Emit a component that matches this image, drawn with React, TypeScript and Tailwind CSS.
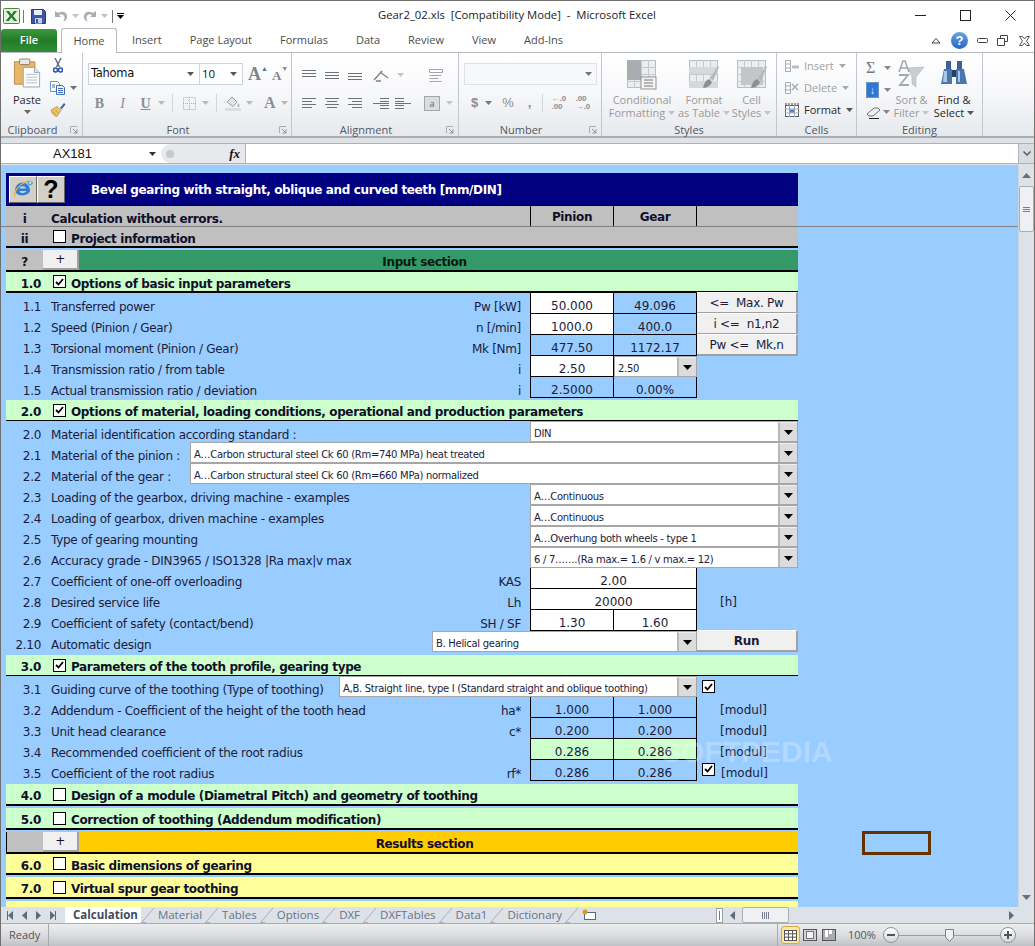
import type { ReactNode } from "react";

const BOLD = "font-bold text-[12px] tracking-[-0.37px]";

const Caret = ({ className = "ml-[3px]", color = "#6b6f75" }: { className?: string; color?: string }) => (
  <svg width="7" height="4" viewBox="0 0 7 4" className={`flex-none ${className}`}>
    <path d="M0 0h7L3.500 4z" fill={color} />
  </svg>
);

// ---- toolbar icons ----
const ExcelLogo = () => (
  <svg width="17" height="16" viewBox="0 0 17 16">
    <rect x="0.5" y="0.5" width="16" height="15" rx="1" fill="#e4f0dc" stroke="#4b8a3c" />
    <path d="M3 3h3l2.400 3.400L11 3h3l-4 5 4.200 5h-3.100L8.400 9.600 5.800 13H2.800l4-5z" fill="#1f7a2a" />
  </svg>
);
const SaveIcon = () => (
  <svg width="15" height="15" viewBox="0 0 15 15">
    <path d="M0.500 0.500h12l2 2v12h-14z" fill="#3f55a8" stroke="#2b3a80" />
    <rect x="3" y="1" width="8" height="5" fill="#e8edf7" />
    <rect x="4" y="9" width="7" height="5.500" fill="#c7cede" />
    <rect x="5" y="10" width="2" height="4" fill="#3f55a8" />
  </svg>
);
const UndoIcon = ({ flip = false }: { flip?: boolean }) => (
  <svg width="14" height="13" viewBox="0 0 14 13" className={flip ? "-scale-x-100" : ""}>
    <path d="M1 1v6h6L5 5c2-1.500 5-.5 5.500 2 .3 1.800-.5 3.500-1.500 4.500 3-.5 4.500-3 4-6C12.300 2 8 .5 4 3z" fill="#a9adb3" />
  </svg>
);
const PasteIcon = () => (
  <svg width="28" height="32" viewBox="0 0 30 33">
    <path d="M1.500 4.500h22v24h-22z" fill="#e8b666" stroke="#b98a45" />
    <rect x="7" y="1.500" width="11" height="6" rx="1" fill="#e6e8ec" stroke="#8f7a55" />
    <path d="M11 29.500V10.500h12l5.500 5.500v15.500H11z" fill="#fbfcfe" stroke="#9aa3af" />
    <path d="M23 10.500V16h5.500" fill="#dfe5ee" stroke="#9aa3af" />
    <path d="M14 18h12M14 21h12M14 24h12M14 27h12" stroke="#b4bcc8" />
  </svg>
);
const CutIcon = () => (
  <svg width="10" height="15" viewBox="0 0 10 15">
    <path d="M2 0l4.500 9M8 0L3.500 9" stroke="#5b6a82" strokeWidth="1.400" />
    <circle cx="2.500" cy="12" r="2" fill="none" stroke="#2b50b0" strokeWidth="1.500" />
    <circle cx="7.500" cy="12" r="2" fill="none" stroke="#2b50b0" strokeWidth="1.500" />
  </svg>
);
const CopyIcon = () => (
  <svg width="15" height="14" viewBox="0 0 15 14">
    <path d="M.5.500h7l2 2v8h-9z" fill="#fff" stroke="#6f93c9" />
    <path d="M6.500 4.500h6l2 2v7h-8z" fill="#e9f1fb" stroke="#3e6fb8" />
    <path d="M8 7.500h5M8 9.500h5M8 11.500h5M2 4h3M2 6h3" stroke="#3e6fb8" />
  </svg>
);
const PainterIcon = () => (
  <svg width="16" height="15" viewBox="0 0 16 15">
    <path d="M10 6l4-5 1.500 1.500-4 5z" fill="#4a5fb5" />
    <path d="M1 8l6-3.500 4 4L7 14.500C4 14 2 12 1 8z" fill="#e9c368" stroke="#a98a3f" strokeWidth=".7" />
    <path d="M3 9.500l2.500 3M5.500 8l2.500 3" stroke="#a98a3f" strokeWidth=".7" />
  </svg>
);
const Launcher = () => (
  <svg width="8" height="8" viewBox="0 0 8 8">
    <path d="M.5 7V.5H7" fill="none" stroke="#a9adb3" />
    <path d="M3 3l3.500 3.500M7 3.500V7H3.500" fill="none" stroke="#8a8f96" />
  </svg>
);

const Lines = ({ lines, w = 14, h = 10 }: { lines: number[][]; w?: number; h?: number }) => (
  <svg width={w} height={h} viewBox={`0 0 ${w} ${h}`} className="flex-none">
    {lines.map((l, i) => (
      <path key={i} d={`M${l[0]} ${l[2] + 0.5}H${l[1]}`} stroke="#6d7278" />
    ))}
  </svg>
);

const GrayGrid = ({ children }: { children?: ReactNode }) => (
  <svg width="30" height="30" viewBox="0 0 30 30">
    <rect x=".5" y=".5" width="28" height="27" fill="#ecedef" stroke="#b9bcc0" />
    <path d="M7.500 0v28M14.500 0v28M21.500 0v28M0 7.500h29M0 14.500h29M0 21.500h29" stroke="#c6c9cd" />
    {children}
  </svg>
);
const Brush = () => (
  <>
    <path d="M14 28c1-5 3-8 6-9l3 3c-1 3-5 6-9 6z" fill="#8c8f94" />
    <path d="M21 18L29 6l1 1-6 14z" fill="#b5b8bc" />
  </>
);

const RowIcon = ({ d }: { d: ReactNode }) => (
  <svg width="16" height="16" viewBox="0 0 16 16" className="flex-none">{d}</svg>
);

const Binoculars = () => (
  <svg width="28" height="26" viewBox="0 0 28 26">
    <path d="M6 1h5v8H6zM17 1h5v8h-5z" fill="#3d5f94" />
    <path d="M1 24L4 9h8v15zM16 24V9h8l3 15z" fill="#4a76ae" />
    <path d="M4 11h3v11H3zM18 11h2v11h-2z" fill="#a9c7e6" />
    <rect x="12" y="10" width="4" height="7" fill="#23406e" />
  </svg>
);
const SortFilter = () => (
  <svg width="30" height="28" viewBox="0 0 30 28">
    <path d="M11 8l16-1-8 10v10l-4-3v-7z" fill="#c9ccd0" stroke="#b3b6ba" strokeWidth=".6" />
    <path d="M2 12L6 1h2l4 11M4 8h6" fill="none" stroke="#a4a7ab" strokeWidth="1.600" />
    <path d="M2 15h9L3 25h9" fill="none" stroke="#a4a7ab" strokeWidth="1.800" />
  </svg>
);

const IEIcon = () => (
  <svg width="22" height="22" viewBox="0 0 22 22">
    <path d="M3 12a7.500 7.500 0 0 1 15 0v1H7.500c.3 2.500 4.500 3 7 0H18c-2 6-15 6-15-1zm4.500-1.500h6.500c-.5-3-6-3-6.500 0z" fill="#2f7fd6" />
    <path d="M3 19C1 15 6 7 14 4c4-1.500 7-1 6.500 2" fill="none" stroke="#e2b23a" strokeWidth="1.300" />
    <path d="M20 4a2 2 0 1 1-3-1" fill="none" stroke="#4fa3e8" strokeWidth="1.300" />
  </svg>
);

// ---- sheet widgets ----
const Check = ({ checked = false, className = "" }: { checked?: boolean; className?: string }) => (
  <span className={`flex-none w-[13px] h-[13px] bg-white border border-black flex items-center justify-center ${className}`}>
    {checked && (
      <svg width="9" height="8" viewBox="0 0 9 8">
        <path d="M1 4l2.500 2.500L8 1" fill="none" stroke="#000" strokeWidth="1.800" />
      </svg>
    )}
  </span>
);

const Band = ({ num, text, color, checked, h = "h-[22px]", line = "border-b-2", className = "" }: {
  num: string; text: string; color: string; checked?: boolean; h?: string; line?: string; className?: string;
}) => (
  <div className={`flex items-center ${h} ${line} border-black ${color} ${className} ${BOLD}`}>
    <span className="w-[35px] text-right pt-[4px]">{num}</span>
    <Check checked={checked} className="ml-[12px]" />
    <span className="ml-[5px] pt-[4px] whitespace-nowrap">{text}</span>
  </div>
);

const Drop = ({ text, className }: { text: string; className: string }) => (
  <div className={`flex items-stretch h-[21px] bg-white border border-[#a6a6a6] text-[10px] ${className}`}>
    <span className="flex-1 pl-[3px] pt-[3px] flex items-center whitespace-nowrap overflow-hidden">{text}</span>
    <span className="w-[19px] flex-none bg-[#dcdcdc] border-l-2 border-[#b8b8b8] border-t border-t-[#efefef] flex items-center justify-center">
      <svg width="9" height="5" viewBox="0 0 9 5"><path d="M0 0h9L4.500 5z" fill="#000" /></svg>
    </span>
  </div>
);

const Btn = ({ children, bold }: { children: ReactNode; bold?: boolean }) => (
  <div className={`w-[101px] h-[22px] -mt-px flex-none bg-[#f0f0f0] border-r-2 border-b-2 border-[#a0a0a0] border-t border-t-white flex items-center justify-center whitespace-pre text-[12px] ${bold ? "font-bold" : ""}`}>
    {children}
  </div>
);

const Val = ({ v, first, bg = "", w }: { v: string; first?: boolean; bg?: string; w?: string }) => (
  <div className={`${w ?? (first ? "w-[84px]" : "w-[83px]")} flex-none h-[21px] pt-[5px] border-b border-r border-black ${first ? "border-l" : ""} ${bg} flex items-center justify-center text-[12px] tracking-normal`}>
    {v}
  </div>
);

const Row = ({ num, label, unit, w = "w-[479px]", children }: {
  num: string; label: string; unit?: string; w?: string; children?: ReactNode;
}) => (
  <div className="flex items-center h-[21px] text-[12px] text-[#1c1c3a] tracking-[-0.3px]">
    <span className="w-[35px] flex-none text-right pt-[6px]">{num}</span>
    <div className={`ml-[10px] flex-none flex justify-between pt-[6px] pr-[9px] whitespace-nowrap ${w}`}>
      <span>{label}</span>
      {unit && <span>{unit}</span>}
    </div>
    {children}
  </div>
);

const ModUnit = ({ t = "[modul]", className = "ml-[23px]" }: { t?: string; className?: string }) => (
  <span className={`text-[12px] pt-[5px] tracking-normal ${className}`}>{t}</span>
);

const StatCols = () => (
  <div className="flex ml-auto h-full">
    <div className="w-[84px] border-l border-r border-black flex items-center justify-center">Pinion</div>
    <div className="w-[83px] border-r border-black flex items-center justify-center">Gear</div>
    <div className="w-[101px]" />
  </div>
);

const Sheet = () => (
  <div className="relative flex-1 bg-[#99ccff] pt-[8px] pl-[5px] overflow-hidden font-['DejaVu_Sans',sans-serif] text-[#10102a]">
    <div className="w-[792px]">
      {/* title */}
      <div className="h-[33px] bg-[#000080] border-b border-black flex items-center">
        <div className="w-[28px] h-[27px] ml-[3px] bg-[#d4d0c8] border border-t-white border-l-white border-r-[#666] border-b-[#666] flex items-center justify-center"><IEIcon /></div>
        <div className="w-[28px] h-[27px] bg-[#d4d0c8] border border-t-white border-l-white border-r-[#666] border-b-[#666] flex items-center justify-center font-bold text-[25px] leading-none text-black font-['Liberation_Sans']">?</div>
        <span className={`ml-[26px] pt-[2px] text-white whitespace-nowrap ${BOLD}`}>Bevel gearing with straight, oblique and curved teeth [mm/DIN]</span>
      </div>
      <div className={`flex items-center h-[21px] bg-[#c0c0c0] ${BOLD}`}>
        <span className="w-[37px] text-center pt-[4px]">i</span>
        <span className="ml-[8px] pt-[4px]">Calculation without errors.</span>
        <StatCols />
      </div>
      <div className={`flex items-center h-[21px] border-b-2 border-black bg-[#c0c0c0] ${BOLD}`}>
        <span className="w-[37px] text-center pt-[4px]">ii</span>
        <Check className="ml-[10px]" />
        <span className="ml-[5px] pt-[4px]">Project information</span>
      </div>
      <div className={`flex items-stretch h-[22px] mt-[2px] border-b-2 border-black bg-[#339966] ${BOLD}`}>
        <span className="w-[37px] bg-[#c0c0c0] flex items-center justify-center pt-[4px]">?</span>
        <span className="w-[36px] bg-[#f0f0f0] border-r-2 border-b-2 border-[#a0a0a0] flex items-center justify-center font-normal">+</span>
        <span className="flex-1 flex items-center justify-center text-[#0a1a12] pr-[28px] pt-[4px]">Input section</span>
      </div>
      <Band num="1.0" text="Options of basic input parameters" color="bg-[#ccffcc]" checked h="h-[21px]" />
      <Row num="1.1" label="Transferred power" unit="Pw [kW]">
        <Val v="50.000" first bg="bg-white" /><Val v="49.096" /><Btn>{"<=  Max. Pw"}</Btn>
      </Row>
      <Row num="1.2" label="Speed (Pinion / Gear)" unit="n [/min]">
        <Val v="1000.0" first bg="bg-white" /><Val v="400.0" /><Btn>{"i <=  n1,n2"}</Btn>
      </Row>
      <Row num="1.3" label="Torsional moment (Pinion / Gear)" unit="Mk [Nm]">
        <Val v="477.50" first /><Val v="1172.17" /><Btn>{"Pw <=  Mk,n"}</Btn>
      </Row>
      <Row num="1.4" label="Transmission ratio / from table" unit="i">
        <Val v="2.50" first bg="bg-white" /><Drop text="2.50" className="w-[83px]" />
      </Row>
      <Row num="1.5" label="Actual transmission ratio / deviation" unit="i">
        <Val v="2.5000" first /><Val v="0.00%" />
      </Row>

      <Band num="2.0" text="Options of material, loading conditions, operational and production parameters" color="bg-[#ccffcc]" checked h="h-[21px]" line="border-b" className="mt-[2px]" />
      <Row num="2.0" label="Material identification according standard :"><Drop text="DIN" className="flex-1" /></Row>
      <Row num="2.1" label="Material of the pinion :" w="w-[139px]"><Drop text="A…Carbon structural steel Ck 60 (Rm=740 MPa) heat treated" className="flex-1" /></Row>
      <Row num="2.2" label="Material of the gear :" w="w-[139px]"><Drop text="A…Carbon structural steel Ck 60 (Rm=660 MPa) normalized" className="flex-1" /></Row>
      <Row num="2.3" label="Loading of the gearbox, driving machine - examples"><Drop text="A…Continuous" className="flex-1" /></Row>
      <Row num="2.4" label="Loading of gearbox, driven machine - examples"><Drop text="A…Continuous" className="flex-1" /></Row>
      <Row num="2.5" label="Type of gearing mounting"><Drop text="A…Overhung both wheels - type 1" className="flex-1" /></Row>
      <Row num="2.6" label="Accuracy grade - DIN3965 / ISO1328 |Ra max|v max"><Drop text="6 / 7…….(Ra max.= 1.6 / v max.= 12)" className="flex-1" /></Row>
      <Row num="2.7" label="Coefficient of one-off overloading" unit="KAS"><Val v="2.00" first bg="bg-white" w="w-[167px]" /></Row>
      <Row num="2.8" label="Desired service life" unit="Lh"><Val v="20000" first bg="bg-white" w="w-[167px]" /><ModUnit t="[h]" /></Row>
      <Row num="2.9" label="Coefficient of safety (contact/bend)" unit="SH / SF"><Val v="1.30" first bg="bg-white" /><Val v="1.60" bg="bg-white" /></Row>
      <Row num="2.10" label="Automatic design" w="w-[381px]"><Drop text="B. Helical gearing" className="w-[265px] flex-none" /><Btn bold>Run</Btn></Row>

      <Band num="3.0" text="Parameters of the tooth profile, gearing type" color="bg-[#ccffcc]" checked h="h-[21px]" line="border-b" className="mt-[3px]" />
      <Row num="3.1" label="Guiding curve of the toothing (Type of toothing)" w="w-[288px]">
        <Drop text="A,B. Straight line, type I (Standard straight and oblique toothing)" className="w-[358px] flex-none" />
        <Check checked className="ml-[5px]" />
      </Row>
      <Row num="3.2" label="Addendum - Coefficient of the height of the tooth head" unit="ha*"><Val v="1.000" first /><Val v="1.000" /><ModUnit /></Row>
      <Row num="3.3" label="Unit head clearance" unit="c*"><Val v="0.200" first /><Val v="0.200" /><ModUnit /></Row>
      <Row num="3.4" label="Recommended coefficient of the root radius"><Val v="0.286" first bg="bg-[#ccffcc]" /><Val v="0.286" bg="bg-[#ccffcc]" /><ModUnit /></Row>
      <Row num="3.5" label="Coefficient of the root radius" unit="rf*"><Val v="0.286" first /><Val v="0.286" /><Check checked className="ml-[5px] -mt-[3px]" /><ModUnit className="ml-[6px]" /></Row>

      <Band num="4.0" text="Design of a module (Diametral Pitch) and geometry of toothing" color="bg-[#ccffcc]" className="mt-[3px]" />
      <Band num="5.0" text="Correction of toothing (Addendum modification)" color="bg-[#ccffcc]" className="mt-[2px]" />
      <div className={`flex items-stretch h-[22px] mt-[2px] border-b-2 border-black bg-[#ffcc00] ${BOLD}`}>
        <span className="w-[37px] bg-[#c0c0c0] border-l border-black" />
        <span className="w-[36px] bg-[#f0f0f0] border-r-2 border-b-2 border-[#a0a0a0] flex items-center justify-center font-normal">+</span>
        <span className="flex-1 flex items-center justify-center pr-[28px] pt-[4px]">Results section</span>
      </div>
      <Band num="6.0" text="Basic dimensions of gearing" color="bg-[#ffff99]" h="h-[21px]" />
      <Band num="7.0" text="Virtual spur gear toothing" color="bg-[#ffff99]" className="mt-[2px]" />
      <div className="h-[20px] mt-[2px] bg-[#ffff99]" />
    </div>

    {/* frozen pane line, selected cell, watermark lie over the grid */}
    <div className="absolute left-0 right-0 top-[61px] h-px bg-[#808080]" />
    <div className="absolute left-[861px] top-[666px] w-[69px] h-[24px] border-[3px] border-[#663300]" />
    <div className="absolute left-[660px] top-[569px] text-[30px] leading-[36px] font-bold text-white/25 font-['Liberation_Sans'] whitespace-nowrap">SOFTPEDIA</div>
  </div>
);

const ScrollBar = () => (
  <div className="w-[16px] flex-none bg-[#dde1e8] flex flex-col items-center border-l border-[#d0d4da]">
    <svg width="9" height="5" viewBox="0 0 9 5" className="mt-[8px]"><path d="M0 5h9L4.500 0z" fill="#6b7077" /></svg>
    <div className="mt-[8px] w-[15px] h-[46px] bg-[#eef0f4] border border-[#a9afb8] rounded-[2px] flex flex-col items-center justify-center gap-px">
      <i className="w-[7px] h-px bg-[#77808c]" /><i className="w-[7px] h-px bg-[#77808c]" /><i className="w-[7px] h-px bg-[#77808c]" />
    </div>
    <svg width="9" height="5" viewBox="0 0 9 5" className="mt-auto mb-[7px]"><path d="M0 0h9L4.500 5z" fill="#6b7077" /></svg>
  </div>
);

const Group = ({ label, w, children, launcher, dim }: { label: string; w: string; children: ReactNode; launcher?: boolean; dim?: boolean }) => (
  <div className={`${w} flex-none flex flex-col h-full border-r border-[#c3c7cd]`}>
    <div className="h-[69px] flex-none flex">{children}</div>
    <div className={`flex-1 flex items-center justify-center relative text-[11px] ${launcher ? "pr-[18px]" : ""} ${dim ? "text-[#8a93a0]" : "text-[#4f5965]"}`}>
      {label}
      {launcher && <span className="absolute right-[4px] top-[4px]"><Launcher /></span>}
    </div>
  </div>
);

const BigBtn = ({ icon, l1, l2, w, dim = true }: { icon: ReactNode; l1: string; l2: string; w: string; dim?: boolean }) => (
  <div className={`${w} flex-none flex flex-col items-center pt-[7px] leading-[13px] text-[11px] ${dim ? "text-[#9a9a9a]" : "text-[#2a2a2a]"}`}>
    <div className="h-[31px]">{icon}</div>
    <span className="mt-[2px] whitespace-nowrap">{l1}</span>
    <span className="whitespace-nowrap flex items-center">{l2}<Caret className="ml-[3px]" color={dim ? "#c2c4c7" : "#555"} /></span>
  </div>
);

const CellsRow = ({ icon, text, dim = true }: { icon: ReactNode; text: string; dim?: boolean }) => (
  <div className={`h-[22px] flex items-center pl-[7px] text-[11px] ${dim ? "text-[#a0a0a0]" : "text-[#2a2a2a]"}`}>
    {icon}
    <span className="ml-[4px]">{text}</span>
    <Caret className="ml-[5px]" color={dim ? "#a8a8a8" : "#555"} />
  </div>
);

const Ribbon = () => (
  <div className="h-[86px] flex bg-gradient-to-b from-white via-[#f6f7f9] to-[#e6e9ed] border-t border-t-[#b6bbc2] border-b-2 border-b-[#a9aeb5] font-['Open_Sans',sans-serif]">
    <Group label="Clipboard" w="w-[82px]" launcher>
      <div className="w-[48px] flex-none flex flex-col items-center pl-[4px] pt-[4px] text-[11px] text-[#2a2a2a]">
        <PasteIcon />
        <span className="mt-[4px] leading-[14px]">Paste</span>
        <Caret className="mt-[3px]" color="#666" />
      </div>
      <div className="flex flex-col pl-[1px] pt-[5px]">
        <span className="ml-[3px]"><CutIcon /></span>
        <span className="mt-[8px] flex items-center"><CopyIcon /><Caret className="ml-[5px]" /></span>
        <span className="mt-[7px]"><PainterIcon /></span>
      </div>
    </Group>
    <Group label="Font" w="w-[209px]" launcher>
      <div className="flex flex-col pl-[5px] pt-[10px]">
        <div className="flex items-center h-[22px]">
          <div className="w-[112px] h-full bg-white border border-[#d0d4da] flex items-center justify-between px-[2px] text-[11.500px] text-[#111] font-['DejaVu_Sans'] tracking-[-0.3px]">Tahoma<Caret className="mr-[3px]" color="#555" /></div>
          <div className="w-[43px] h-full bg-white border border-l-0 border-[#d0d4da] flex items-center justify-between px-[2px] text-[11.500px] text-[#111]">10<Caret className="mr-[3px]" color="#555" /></div>
          <span className="ml-[5px] font-['Liberation_Serif'] font-bold text-[18px] text-[#80858c] leading-none">A</span>
          <span className="text-[7px] text-[#4a76ae] -mt-[9px]">▲</span>
          <span className="ml-[4px] font-['Liberation_Serif'] font-bold text-[13px] text-[#80858c] leading-none mt-[2px]">A</span>
          <span className="text-[7px] text-[#888] -mt-[9px]">▼</span>
        </div>
        <div className="flex items-center h-[20px] mt-[8px] text-[#8a8e94] font-['Liberation_Serif'] text-[14px]">
          <span className="font-bold w-[23px] text-center">B</span>
          <span className="italic w-[23px] text-center">I</span>
          <span className="underline font-bold w-[23px] text-center">U</span>
          <Caret className="ml-[1px]" color="#b5b8bc" />
          <i className="w-px h-[18px] bg-[#d3d6da] ml-[7px]" />
          <svg width="13" height="13" viewBox="0 0 13 13" className="ml-[10px]"><rect x=".5" y=".5" width="12" height="12" fill="none" stroke="#a8acb2" strokeDasharray="1 1" /><path d="M6.500 0v13M0 6.500h13" stroke="#a8acb2" strokeDasharray="1 1" /></svg>
          <Caret className="ml-[6px]" color="#b5b8bc" />
          <i className="w-px h-[18px] bg-[#d3d6da] ml-[7px]" />
          <svg width="17" height="16" viewBox="0 0 17 16" className="ml-[8px]"><path d="M2 7l5-5 5 5-4 4.500z" fill="#e2e4e8" stroke="#9a9ea4" /><path d="M13 8c1 1.500 1.500 2 1.500 3a1 1 0 0 1-2 0c0-1 .5-1.500.5-3z" fill="#a8acb2" /><rect x="0" y="13" width="16" height="3" fill="#dadde1" /></svg>
          <Caret className="ml-[4px]" color="#b5b8bc" />
          <span className="ml-[11px] font-bold text-[16px]">A</span>
          <Caret className="ml-[5px]" color="#b5b8bc" />
        </div>
      </div>
    </Group>
    <Group label="Alignment" w="w-[167px]" launcher>
      <div className="flex flex-col pl-[10px]">
        <div className="flex items-center h-[22px] mt-[11px] gap-[9px]">
          <Lines lines={[[0, 14, 0], [0, 14, 3], [0, 14, 6]]} h={10} />
          <Lines lines={[[0, 14, 2], [0, 14, 5], [0, 14, 8]]} h={10} />
          <Lines lines={[[0, 14, 3], [0, 14, 6], [0, 14, 9]]} h={10} />
          <svg width="16" height="13" viewBox="0 0 16 13" className="ml-[2px]"><path d="M1 11L9 2M3 12h5M7 3l8 6" stroke="#7e8288" fill="none" strokeWidth="1.300" /></svg>
          <span className="-ml-[4px]"><Caret color="#c2c4c7" /></span>
          <svg width="16" height="15" viewBox="0 0 16 15" className="ml-[16px]"><path d="M.5 1.500h13v3h-13zM.5 7.500h12M.5 10.500h9M.5 13.500h12" fill="none" stroke="#a3a7ad" /></svg>
        </div>
        <div className="flex items-center h-[20px] mt-[7px] gap-[9px]">
          <Lines lines={[[0, 14, 0], [0, 10, 3], [0, 14, 6], [0, 10, 9]]} />
          <Lines lines={[[0, 14, 0], [2, 12, 3], [0, 14, 6], [2, 12, 9]]} />
          <Lines lines={[[0, 14, 0], [4, 14, 3], [0, 14, 6], [4, 14, 9]]} />
          <span className="ml-[2px]"><Lines lines={[[7, 16, 0], [7, 16, 3], [0, 16, 5], [7, 16, 7], [7, 16, 10]]} w={16} h={11} /></span>
          <span className="-ml-[3px]"><Lines lines={[[0, 9, 0], [0, 9, 3], [0, 16, 5], [0, 9, 7], [0, 9, 10]]} w={16} h={11} /></span>
          <div className="ml-[4px] w-[16px] h-[15px] bg-[#d9dce0] border border-[#a3a7ad] text-[9px] text-center leading-[13px] text-[#666]">a</div>
          <span className="-ml-[6px]"><Caret color="#c2c4c7" /></span>
        </div>
      </div>
    </Group>
    <Group label="Number" w="w-[143px]" launcher>
      <div className="flex flex-col pl-[5px] pt-[10px] w-full">
        <div className="w-[133px] h-[22px] border border-[#dfe2e6] bg-[#f7f8f9] flex items-center justify-end pr-[4px]"><Caret color="#777" /></div>
        <div className="flex items-center h-[20px] mt-[8px] text-[#8a8e94] text-[13px] font-['Liberation_Sans']">
          <span className="ml-[7px] font-bold">$</span>
          <Caret className="ml-[7px]" color="#777" />
          <span className="ml-[10px]">%</span>
          <span className="ml-[14px] font-bold">,</span>
          <i className="w-px h-[18px] bg-[#d3d6da] ml-[11px]" />
          <span className="ml-[8px] text-[8px] leading-[8px] font-bold w-[20px]">←.0<br />.00</span>
          <span className="ml-[4px] text-[8px] leading-[8px] font-bold w-[20px]">.00<br />→.0</span>
        </div>
      </div>
    </Group>
    <Group label="Styles" w="w-[175px]">
      <BigBtn w="w-[80px]" l1="Conditional" l2="Formatting" icon={<GrayGrid><path d="M0 0h14v20H0z" fill="#a9acb1" /><rect x="14" y="17" width="15" height="12" fill="#f4f4f5" stroke="#8f9297" /><path d="M17 20h9M17 23h9M17 26h9" stroke="#777" /></GrayGrid>} />
      <BigBtn w="w-[44px]" l1="Format" l2="as Table" icon={<GrayGrid><path d="M0 7h29v7H0zM0 21h29v7H0z" fill="#d6d8db" /><Brush /></GrayGrid>} />
      <BigBtn w="w-[51px]" l1="Cell" l2="Styles" icon={<GrayGrid><rect x="4" y="7" width="22" height="18" fill="#c3c5c9" /><Brush /></GrayGrid>} />
    </Group>
    <Group label="Cells" w="w-[80px]">
      <div className="flex flex-col pt-[2px]">
        <CellsRow text="Insert" icon={<RowIcon d={<><path d="M1.500 2.500h5v11h-5zM1.500 6h5M1.500 10h5" fill="none" stroke="#a9adb3" /><path d="M8 7.500h7v3H8z" fill="#b9bcc1" /></>} />} />
        <CellsRow text="Delete" icon={<RowIcon d={<><path d="M1.500 2.500h5v11h-5zM1.500 6h5M1.500 10h5" fill="none" stroke="#a9adb3" /><path d="M8 4l6 6M14 4l-6 6" stroke="#a9adb3" strokeWidth="1.500" /></>} />} />
        <CellsRow text="Format" dim={false} icon={<RowIcon d={<><rect x="1.500" y="3.500" width="13" height="11" fill="#fff" stroke="#5c6570" /><path d="M1 7h14M1 11h14M5.500 3v12M10.500 3v12" stroke="#a0a8b2" /><rect x="6" y="7.500" width="4" height="3" fill="#4a86d8" /><path d="M2 1v2M5 1v2M8 1v2M11 1v2M14 1v2" stroke="#444" /></>} />} />
      </div>
    </Group>
    <Group label="Editing" w="w-[126px]">
      <div className="flex flex-col w-[36px] flex-none pl-[9px] pt-[5px]">
        <div className="h-[20px] flex items-center"><span className="text-[16px] leading-none font-['Liberation_Serif'] text-[#777] w-[15px]">Σ</span><Caret className="ml-[3px]" color="#888" /></div>
        <div className="h-[20px] flex items-center mt-[2px]"><span className="w-[13px] h-[16px] bg-[#2f77d4] border border-[#6d94c9] flex items-center justify-center text-white text-[10px]">↓</span><Caret className="ml-[5px]" color="#888" /></div>
        <div className="h-[20px] flex items-center mt-[2px]"><svg width="15" height="13" viewBox="0 0 15 13"><path d="M1 8l7-6h4l2 2-7 6H3z" fill="#eef0f3" stroke="#6d7278" /><path d="M3 12.500h10" stroke="#222" /></svg><Caret className="ml-[2px]" color="#888" /></div>
      </div>
      <BigBtn w="w-[37px]" l1="Sort &" l2="Filter" icon={<SortFilter />} />
      <BigBtn w="w-[48px]" dim={false} l1="Find &" l2="Select" icon={<Binoculars />} />
    </Group>
  </div>
);

const TabGap = () => (
  <svg width="14" height="16" viewBox="0 0 14 16" className="flex-none"><path d="M1 15L13 1" stroke="#a9afb8" /><path d="M0 15.500h5" stroke="#a9afb8" /></svg>
);

const NavTri = ({ dir }: { dir: "l" | "r" }) => (
  <svg width="5" height="9" viewBox="0 0 5 9"><path d={dir === "l" ? "M5 0v9L0 4.500z" : "M0 0v9l5-4.500z"} fill="#5f6b7a" /></svg>
);

const SheetTabs = () => (
  <div className="h-[17px] flex items-center bg-[#dde1e8] border-b border-[#a9aeb5] font-['Open_Sans',sans-serif] text-[11.500px] text-[#66748a]">
    <div className="w-[60px] flex-none flex items-center gap-[9px] pl-[6px]">
      <span className="flex items-center"><i className="w-px h-[9px] bg-[#5f6b7a]" /><NavTri dir="l" /></span><NavTri dir="l" /><NavTri dir="r" /><span className="flex items-center"><NavTri dir="r" /><i className="w-px h-[9px] bg-[#5f6b7a]" /></span>
    </div>
    <span className="ml-[4px] h-full bg-white pl-[8px] pr-[3px] font-bold text-[#3e4c5e] flex items-center">Calculation</span>
    {["Material", "Tables", "Options", "DXF", "DXFTables", "Data1", "Dictionary"].map((t) => (
      <span key={t} className="flex items-center h-full">
        <TabGap /><span className="px-[3px]">{t}</span>
      </span>
    ))}
    <TabGap />
    <svg width="16" height="13" viewBox="0 0 16 13" className="ml-[2px]"><rect x="3.500" y="3.500" width="11" height="7" fill="#fff" stroke="#4a6a94" /><circle cx="4" cy="3" r="2.500" fill="#e09a20" /></svg>
    <div className="ml-auto flex items-center h-full">
      <span className="w-[7px] h-[15px] bg-white border border-[#9aa1ab] flex items-center justify-center"><i className="w-px h-[9px] bg-[#777]" /></span>
      <span className="ml-[7px]"><NavTri dir="l" /></span>
      <div className="ml-[7px] w-[47px] h-[16px] rounded-[2px] bg-[#eef0f4] border border-[#a9afb8] flex items-center justify-center gap-px">
        <i className="w-px h-[7px] bg-[#77808c]" /><i className="w-px h-[7px] bg-[#77808c]" /><i className="w-px h-[7px] bg-[#77808c]" /><i className="w-px h-[7px] bg-[#77808c]" />
      </div>
      <span className="ml-[220px]"><NavTri dir="r" /></span>
      <span className="w-[20px]" />
    </div>
  </div>
);

const ZoomBtn = ({ plus }: { plus?: boolean }) => (
  <span className="w-[16px] h-[16px] rounded-full bg-gradient-to-b from-white to-[#d4d7db] border border-[#8f949b] flex items-center justify-center">
    <svg width="8" height="8" viewBox="0 0 8 8"><path d={plus ? "M0 4h8M4 0v8" : "M0 4h8"} stroke="#555" strokeWidth="2" /></svg>
  </span>
);

const StatusBar = () => (
  <div className="flex-1 flex items-center bg-gradient-to-b from-[#eceded] via-[#dcdde0] to-[#bfc2c6] font-['Open_Sans',sans-serif] text-[11px] text-[#555]">
    <span className="w-[48px] pl-[8px] border-r border-[#a6a9ae] h-full flex items-center">Ready</span>
    <div className="ml-auto flex items-center h-full">
      <i className="w-px h-full bg-[#a6a9ae]" />
      <span className="ml-[3px] w-[19px] h-[18px] rounded-[3px] bg-[#fce79a] border border-[#d5a94a] flex items-center justify-center">
        <svg width="13" height="11" viewBox="0 0 13 11"><rect x=".5" y=".5" width="12" height="10" fill="#fff" stroke="#555" /><path d="M4.500 0v11M8.500 0v11M0 3.800h13M0 7.200h13" stroke="#555" /></svg>
      </span>
      <span className="ml-[3px]"><svg width="14" height="12" viewBox="0 0 14 12"><rect x=".5" y=".5" width="13" height="11" fill="#cfd1d4" stroke="#555" /><rect x="3.500" y="2.500" width="7" height="7" fill="#f2f2f2" stroke="#777" /></svg></span>
      <span className="ml-[5px]"><svg width="14" height="12" viewBox="0 0 14 12"><rect x=".5" y=".5" width="13" height="11" fill="#a9abae" stroke="#555" /><path d="M3 1h3v7H3zM7 1h3v4H7z" fill="#fff" /></svg></span>
      <span className="ml-[12px] w-[27px]">100%</span>
      <span className="ml-[8px]"><ZoomBtn /></span>
      <span className="relative w-[101px] h-px bg-[#9a9da2]">
        <svg width="9" height="13" viewBox="0 0 9 13" className="absolute left-[46px] -top-[6px]"><path d="M.5.500h8V8L4.500 12.500.5 8z" fill="#eef0f2" stroke="#7d8187" /></svg>
      </span>
      <ZoomBtn plus />
      <span className="w-[18px]" />
    </div>
  </div>
);

const RibbonTabs = () => (
  <div className="h-[24px] flex items-end bg-white font-['Open_Sans',sans-serif] text-[11px] text-[#4c4c4c]">
    <div className="w-[56px] h-[23px] rounded-t-[3px] bg-gradient-to-b from-[#3c9a3f] via-[#237a27] to-[#2f8f36] text-white font-semibold flex items-center justify-center">File</div>
    <div className="ml-[4px] w-[56px] h-[25px] -mb-px relative bg-white border border-b-0 border-[#b6bbc2] rounded-t-[3px] flex items-center justify-center">Home</div>
    <div className="ml-[15px] h-[23px] flex items-center gap-[28px] whitespace-nowrap">
      <span>Insert</span><span>Page Layout</span><span>Formulas</span><span>Data</span><span>Review</span><span>View</span><span>Add-Ins</span>
    </div>
    <div className="ml-auto h-[23px] flex items-center pr-[4px]">
      <svg width="10" height="7" viewBox="0 0 10 7" className="mr-[10px]"><path d="M1 6l4-4.500L9 6H1z" fill="none" stroke="#444" /></svg>
      <span className="w-[17px] h-[17px] rounded-full bg-gradient-to-b from-[#6aa3e4] to-[#2566c3] text-white font-bold text-[13px] flex items-center justify-center font-['Liberation_Sans']">?</span>
      <svg width="12" height="6" viewBox="0 0 12 6" className="ml-[9px]"><rect x=".5" y=".5" width="10" height="4" rx="1" fill="none" stroke="#444" /></svg>
      <svg width="11" height="11" viewBox="0 0 11 11" className="ml-[8px]"><path d="M3.500 3V.5h7v6H8M.5 3.500h7v7h-7z" fill="none" stroke="#444" /></svg>
      <svg width="11" height="10" viewBox="0 0 11 10" className="ml-[11px]"><path d="M.5.500h3l2 2.500 2-2.500h3L7.500 5l3 4.500h-3L5.500 7l-2 2.500h-3l3-4.500z" fill="#fff" stroke="#555" /></svg>
    </div>
  </div>
);

const TitleBar = () => (
  <div className="h-[27px] flex items-center relative bg-white font-['Open_Sans',sans-serif] text-[11.300px] text-[#222]">
    <div className="flex items-center pl-[2px] pt-[3px]">
      <ExcelLogo />
      <i className="ml-[3px] w-px h-[13px] bg-[#777]" />
      <span className="ml-[7px]"><SaveIcon /></span>
      <span className="ml-[8px]"><UndoIcon /></span>
      <Caret className="ml-[4px]" color="#bfc2c6" />
      <span className="ml-[4px]"><UndoIcon flip /></span>
      <Caret className="ml-[4px]" color="#bfc2c6" />
      <i className="ml-[4px] w-px h-[13px] bg-[#777]" />
      <span className="ml-[4px] flex flex-col items-center gap-px"><i className="w-[7px] h-px bg-black" /><Caret className="" color="#000" /></span>
    </div>
    <span className="absolute left-[377px] top-[6px] whitespace-pre">{"Gear2_02.xls  [Compatibility Mode]  -  Microsoft Excel"}</span>
    <div className="ml-auto flex items-center pr-[18px] pt-[2px]">
      <i className="w-[11px] h-px bg-[#222]" />
      <i className="ml-[34px] w-[11px] h-[11px] border border-[#222]" />
      <svg width="11" height="11" viewBox="0 0 11 11" className="ml-[34px]"><path d="M.5.500l10 10M10.500.500l-10 10" stroke="#222" /></svg>
    </div>
  </div>
);

const FormulaBar = () => (
  <div className="h-[27px] bg-[#dfe3e8] pt-[5px] font-['Liberation_Sans',sans-serif]">
    <div className="h-[21px] flex bg-white border-y border-[#aeb2b8] text-[13px] text-[#111]">
      <div className="w-[160px] flex items-center pl-[52px]">AX181<Caret className="ml-auto mr-[5px]" color="#333" /></div>
      <div className="w-[85px] bg-[#e7e9ec] border-r border-[#aeb2b8] rounded-l-[10px] flex items-center pl-[5px]">
        <i className="w-[8px] h-[8px] rounded-full bg-[#c6c9cd]" />
        <span className="ml-auto mr-[5px] italic font-bold font-['Liberation_Serif'] text-[13px]">fx</span>
      </div>
      <div className="flex-1" />
      <div className="w-[16px] bg-[#d9dde2] border-l border-[#aeb2b8] flex items-center justify-center">
        <svg width="8" height="5" viewBox="0 0 8 5"><path d="M1 0l3 3 3-3 1 1-4 4-4-4z" fill="#555" /></svg>
      </div>
    </div>
  </div>
);

export default function App() {
  return (
    <div className="w-[1035px] h-[946px] flex flex-col overflow-hidden bg-white border-l border-t border-r border-[#6f6f6f]">
      <TitleBar />
      <RibbonTabs />
      <Ribbon />
      <FormulaBar />
      <div className="h-[742px] flex">
        <Sheet />
        <ScrollBar />
      </div>
      <SheetTabs />
      <StatusBar />
    </div>
  );
}
